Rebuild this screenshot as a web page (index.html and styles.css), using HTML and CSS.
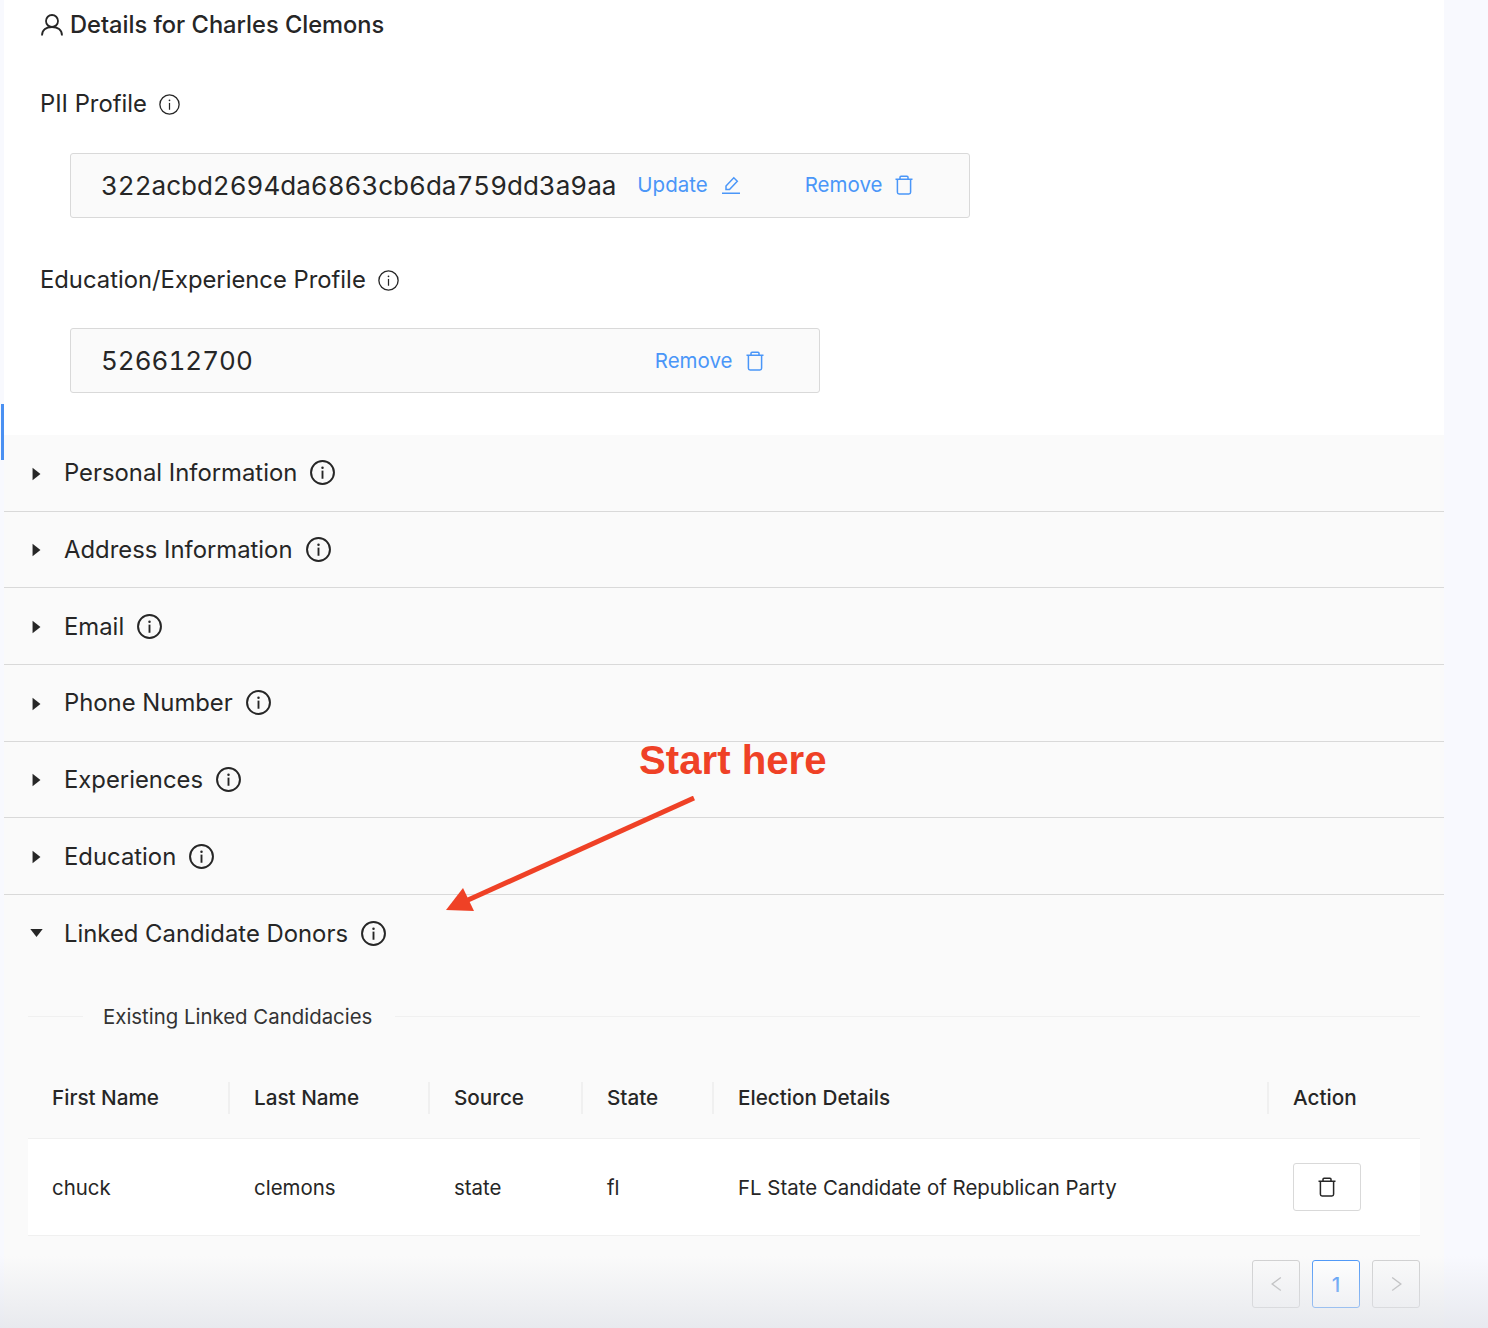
FILE: index.html
```html
<!DOCTYPE html>
<html lang="en">
<head>
<meta charset="utf-8">
<title>Details for Charles Clemons</title>
<link rel="stylesheet" href="styles.css">
</head>
<body>
<svg class="defs" width="0" height="0" aria-hidden="true">
  <symbol id="info" viewBox="0 0 24 24"><circle cx="12" cy="12" r="11" fill="none" stroke="currentColor" stroke-width="1.9"/><circle cx="12" cy="7.4" r="1.2" fill="currentColor"/><rect x="11.1" y="10.2" width="1.8" height="7.8" fill="currentColor"/></symbol>
  <symbol id="info-thin" viewBox="0 0 24 24"><circle cx="12" cy="12" r="11" fill="none" stroke="currentColor" stroke-width="1.5"/><circle cx="12" cy="7.2" r="1" fill="currentColor"/><rect x="11.3" y="10.2" width="1.4" height="7.8" fill="currentColor"/></symbol>
  <symbol id="trash" viewBox="0 0 18 20"><path d="M0.500 4.300h17M5 4.300V2.200q0-1 1-1h6q1 0 1 1v2.100M2.400 4.300v12.900q0 1.700 1.700 1.700h9.800q1.700 0 1.700-1.700V4.300" fill="none" stroke="currentColor" stroke-width="1.500"/></symbol>
  <symbol id="caret" viewBox="0 0 8 12"><path d="M0.500 0.500L7.500 6L0.500 11.500Z" fill="currentColor"/></symbol>
</svg>
<div class="page">
  <div class="stripe"></div>
  <main class="panel">
    <section class="top">
      <h1 class="title">
        <svg class="user-icon" viewBox="0 0 22 22"><circle cx="11" cy="7" r="6" fill="none" stroke="currentColor" stroke-width="1.800"/><path d="M1 21.500c0-5.800 4.400-8.500 10-8.500s10 2.700 10 8.500" fill="none" stroke="currentColor" stroke-width="1.800"/></svg>
        Details for Charles Clemons
      </h1>
      <h2 class="profile-label">PII Profile <svg class="info-sm"><use href="#info-thin"/></svg></h2>
      <div class="id-box id-box-wide">
        <span class="id-value">322acbd2694da6863cb6da759dd3a9aa</span>
        <a class="link link-update">Update
          <svg class="pen-icon" viewBox="0 0 18 18"><path d="M0 17.200h18M4 13.500v-3.500L11.800 1.800l3.500 3.500L7.500 13.500Z" fill="none" stroke="currentColor" stroke-width="1.500"/></svg>
        </a>
        <a class="link link-remove">Remove <svg class="link-icon"><use href="#trash"/></svg></a>
      </div>
      <h2 class="profile-label label-second">Education/Experience Profile <svg class="info-sm"><use href="#info-thin"/></svg></h2>
      <div class="id-box id-box-narrow">
        <span class="id-value">526612700</span>
        <a class="link link-remove-solo">Remove <svg class="link-icon"><use href="#trash"/></svg></a>
      </div>
    </section>
    <section class="collapse">
      <div class="row"><svg class="caret"><use href="#caret"/></svg><span>Personal Information</span><svg class="info-lg"><use href="#info"/></svg></div>
      <div class="row"><svg class="caret"><use href="#caret"/></svg><span>Address Information</span><svg class="info-lg"><use href="#info"/></svg></div>
      <div class="row"><svg class="caret"><use href="#caret"/></svg><span>Email</span><svg class="info-lg"><use href="#info"/></svg></div>
      <div class="row"><svg class="caret"><use href="#caret"/></svg><span>Phone Number</span><svg class="info-lg"><use href="#info"/></svg></div>
      <div class="row"><svg class="caret"><use href="#caret"/></svg><span>Experiences</span><svg class="info-lg"><use href="#info"/></svg></div>
      <div class="row"><svg class="caret"><use href="#caret"/></svg><span>Education</span><svg class="info-lg"><use href="#info"/></svg></div>
      <div class="row row-open"><svg class="caret caret-open"><use href="#caret"/></svg><span>Linked Candidate Donors</span><svg class="info-lg"><use href="#info"/></svg></div>
      <div class="content">
        <div class="divider"><span>Existing Linked Candidacies</span></div>
        <table class="table">
          <colgroup><col class="c1"><col class="c2"><col class="c3"><col class="c4"><col class="c5"><col class="c6"></colgroup>
          <thead><tr><th>First Name</th><th>Last Name</th><th>Source</th><th>State</th><th>Election Details</th><th>Action</th></tr></thead>
          <tbody><tr><td>chuck</td><td>clemons</td><td>state</td><td>fl</td><td>FL State Candidate of Republican Party</td><td><button class="del-btn"><svg class="del-icon"><use href="#trash"/></svg></button></td></tr></tbody>
        </table>
        <nav class="pager">
          <span class="pg"><svg class="pg-icon" viewBox="0 0 12 14"><path d="M10 1L2 7l8 6" fill="none" stroke="currentColor" stroke-width="1.300"/></svg></span>
          <span class="pg pg-on">1</span>
          <span class="pg"><svg class="pg-icon" viewBox="0 0 12 14"><path d="M2 1l8 6-8 6" fill="none" stroke="currentColor" stroke-width="1.300"/></svg></span>
        </nav>
      </div>
    </section>
  </main>
  <div class="note">Start here</div>
  <svg class="arrow" viewBox="0 0 260 120" width="260" height="120"><path d="M248 2L22 104" stroke="#ef4126" stroke-width="5" fill="none"/><path d="M0 114L17 92L28 115Z" fill="#ef4126"/></svg>
  <div class="fade"></div>
</div>
</body>
</html>
```
FILE: styles.css
```css
* { box-sizing: border-box; }
html, body { margin: 0; padding: 0; }
body { background: #f8f9fe; font-family: Inter, "Liberation Sans", sans-serif; color: #262626; }
.defs { position: absolute; }
.page { position: relative; width: 1488px; height: 1328px; overflow: hidden; padding-left: 4px; }
.panel { width: 1440px; height: 1328px; background: #fff; }
.stripe { position: absolute; left: 1px; top: 404px; width: 3px; height: 56px; background: #4a90f2; }

.top { height: 435px; padding: 0 0 0 36px; overflow: hidden; }
.title { display: flex; align-items: center; gap: 7px; margin: 0; height: 50px; font-size: 23.650px; font-weight: 500; line-height: 50px; }
.user-icon { width: 22px; height: 22px; margin-left: 1px; flex: none; }
.profile-label { display: flex; align-items: center; gap: 12px; margin: 0; height: 30px; margin-top: 39px; font-size: 23.800px; font-weight: 400; line-height: 30px; }
.label-second { margin-top: 47px; }
.info-sm { width: 21px; height: 21px; flex: none; }
.id-box { display: flex; align-items: center; height: 65px; margin: 34px 0 0 30px; padding-left: 30px; background: #fafafa; border: 1px solid #d9d9d9; border-radius: 3px; }
.id-box-wide { width: 900px; }
.id-box-narrow { width: 750px; margin-top: 33px; }
.id-value { font-size: 26px; font-variant-numeric: tabular-nums; white-space: nowrap; }
.link { display: inline-flex; align-items: center; gap: 13px; color: #4a96f8; font-size: 20.500px; white-space: nowrap; }
.link-update { margin-left: 21px; gap: 14px; padding-bottom: 2px; }
.link-remove { margin-left: 65px; padding-bottom: 2px; }
.link-remove-solo { margin-left: 402px; }
.link-icon { width: 18px; height: 20px; flex: none; }
.pen-icon { width: 18px; height: 18px; flex: none; }

.collapse { background: #fafafa; height: 893px; }
.row { display: flex; align-items: center; height: 76.67px; padding-left: 28px; border-bottom: 1px solid #d9d9d9; font-size: 23.850px; }
.row-open { border-bottom: 0; }
.caret { width: 9px; height: 14px; margin-right: 23px; flex: none; color: #262626; transform: translateY(1px); }
.caret-open { transform: rotate(90deg); }
.info-lg { width: 25px; height: 25px; margin-left: 13px; flex: none; }

.content { padding: 0 24px; }
.divider { display: flex; align-items: center; height: 32px; margin-top: 29px; font-size: 20.400px; color: #333; }
.divider::before, .divider::after { content: ""; height: 1px; background: #f0f0f0; }
.divider::before { width: 55px; }
.divider::after { flex: 1; }
.divider span { padding: 0 23px 0 20px; }

.table { width: 1392px; margin-top: 25px; table-layout: fixed; border-collapse: collapse; font-size: 20.450px; }
.c1 { width: 202px; } .c2 { width: 200px; } .c3 { width: 153px; } .c4 { width: 131px; } .c5 { width: 555px; } .c6 { width: 151px; }
.table th { position: relative; height: 81px; padding: 0 0 0 24px; text-align: left; font-size: 20.700px; font-weight: 500; background: #fafafa; border-bottom: 1px solid #f0f0f0; }
.table th + th::before { content: ""; position: absolute; left: -2px; top: 24px; height: 32px; width: 2px; background: #f0f0f0; }
.table td { height: 97px; padding: 0 0 0 24px; background: #fff; border-bottom: 1px solid #f0f0f0; }
.del-btn { display: flex; align-items: center; justify-content: center; width: 68px; height: 48px; padding: 0; background: #fff; border: 1px solid #d9d9d9; border-radius: 3px; color: #262626; }
.del-icon { width: 18px; height: 20px; }

.pager { display: flex; justify-content: flex-end; gap: 12px; margin-top: 24px; }
.pg { display: flex; align-items: center; justify-content: center; width: 48px; height: 48px; border: 1px solid #d0d0d0; border-radius: 3px; color: #b8b8b8; }
.pg-on { border-color: #4a96f8; color: #4a96f8; font-size: 20.500px; font-weight: 500; background: #fff; }
.pg-icon { width: 13px; height: 16px; }

.note { position: absolute; left: 639px; top: 738px; font-family: "Liberation Sans", Arial, sans-serif; font-size: 40.200px; line-height: 46px; font-weight: 700; color: #ef4126; white-space: nowrap; }
.arrow { position: absolute; left: 446px; top: 796px; }
.fade { position: absolute; left: 0; right: 0; bottom: 0; height: 72px; background: linear-gradient(to bottom, rgba(226,228,234,0), rgba(226,228,234,.75)); pointer-events: none; }
```
